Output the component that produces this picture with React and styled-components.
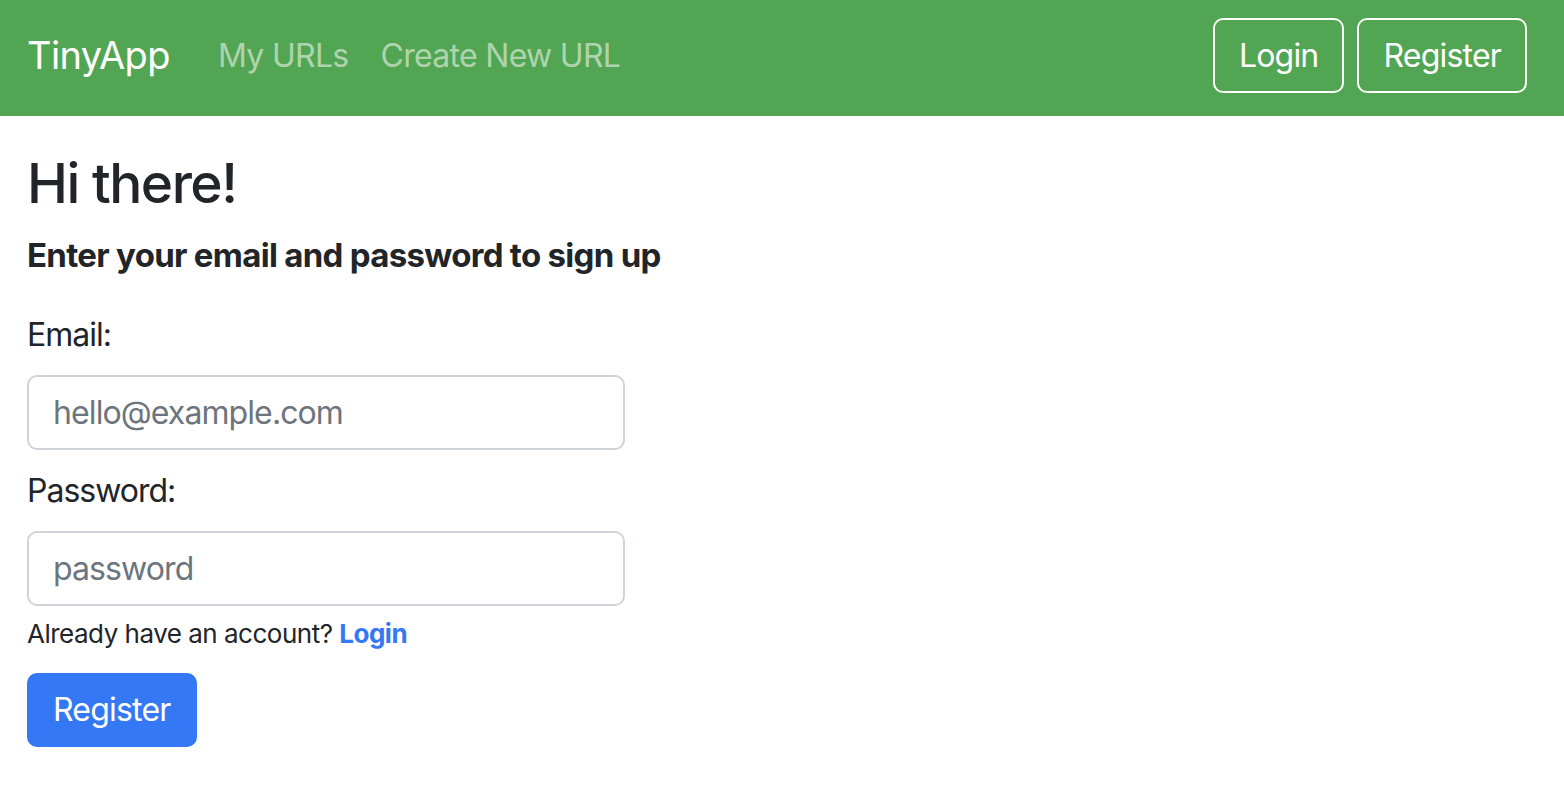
import React from 'react'
import styled, { createGlobalStyle } from 'styled-components'

const GlobalStyle = createGlobalStyle`
  * { box-sizing: border-box; }
  body {
    margin: 0;
    background: #fff;
    color: #212529;
    font-family: Inter, "Liberation Sans", sans-serif;
  }
`

const Navbar = styled.nav`
  height: 116px;
  background: #52a552;
  display: flex;
  align-items: center;
  padding: 0 37px 5px 27px;
`

const Brand = styled.a`
  font-size: 38px;
  line-height: 1.5;
  color: #fff;
  margin-right: 32px;
  text-decoration: none;
  letter-spacing: -0.6px;
`

const NavLinks = styled.div`
  display: flex;
  flex: 1;
`

const NavLink = styled.a`
  font-size: 32px;
  line-height: 1.5;
  padding: 0 16px;
  color: rgba(255, 255, 255, 0.55);
  text-decoration: none;
  letter-spacing: -0.7px;
`

const NavActions = styled.div`
  display: flex;
  gap: 13px;
`

const OutlineButton = styled.button`
  height: 75px;
  padding: 0 24px;
  border: 2px solid #fff;
  border-radius: 10px;
  background: transparent;
  color: #fff;
  font-family: inherit;
  font-size: 32px;
  letter-spacing: -0.8px;
`

const Main = styled.main`
  padding: 34px 27px;
  display: flex;
  flex-direction: column;
  align-items: flex-start;
`

const Title = styled.h1`
  margin: 0;
  font-size: 55px;
  font-weight: 500;
  line-height: 1.2;
  letter-spacing: -1.5px;
`

const Subtitle = styled.h5`
  margin: 20px 0 35px;
  font-size: 33px;
  font-weight: 700;
  line-height: 1.2;
  letter-spacing: -0.7px;
`

const Label = styled.label`
  display: block;
  font-size: 32px;
  line-height: 1.5;
  margin-bottom: 16px;
  letter-spacing: -1px;
`

const Input = styled.input`
  width: 598px;
  height: 75px;
  padding: 0 24px;
  margin-bottom: ${(p) => p.$gap || 0}px;
  border: 2px solid #ced4da;
  border-radius: 10px;
  font-family: inherit;
  font-size: 32px;
  color: #212529;
  letter-spacing: -0.9px;
  &::placeholder {
    color: #6c757d;
  }
`

const Note = styled.p`
  margin: 8px 0 20px;
  font-size: 26px;
  line-height: 1.5;
  letter-spacing: -0.5px;
`

const TextLink = styled.a`
  color: #3478f6;
  font-weight: 700;
  text-decoration: none;
`

const PrimaryButton = styled.button`
  height: 74px;
  padding: 0 24px;
  border: 2px solid #3478f6;
  border-radius: 10px;
  background: #3478f6;
  color: #fff;
  font-family: inherit;
  font-size: 32px;
  letter-spacing: -0.8px;
`

export default function App() {
  return (
    <>
      <GlobalStyle />
      <Navbar>
        <Brand href="#">TinyApp</Brand>
        <NavLinks>
          <NavLink href="#">My URLs</NavLink>
          <NavLink href="#">Create New URL</NavLink>
        </NavLinks>
        <NavActions>
          <OutlineButton>Login</OutlineButton>
          <OutlineButton>Register</OutlineButton>
        </NavActions>
      </Navbar>
      <Main>
        <Title>Hi there!</Title>
        <Subtitle>Enter your email and password to sign up</Subtitle>
        <Label htmlFor="email">Email:</Label>
        <Input id="email" type="email" placeholder="hello@example.com" $gap={17} />
        <Label htmlFor="password">Password:</Label>
        <Input id="password" type="password" placeholder="password" />
        <Note>
          Already have an account? <TextLink href="#">Login</TextLink>
        </Note>
        <PrimaryButton>Register</PrimaryButton>
      </Main>
    </>
  )
}
